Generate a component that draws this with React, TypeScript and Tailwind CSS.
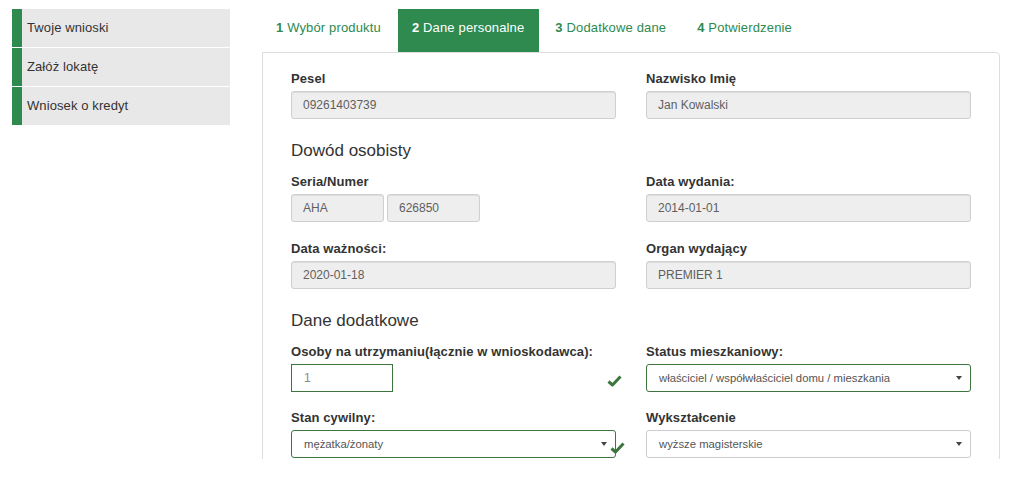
import React from "react";

const sideItems = ["Twoje wnioski", "Załóż lokatę", "Wniosek o kredyt"];

const tabs = [
  { n: "1", label: "Wybór produktu" },
  { n: "2", label: "Dane personalne", active: true },
  { n: "3", label: "Dodatkowe dane" },
  { n: "4", label: "Potwierdzenie" },
];

const Check = () => (
  <svg width="15" height="12" viewBox="0 0 15 12" className="block">
    <path d="M1.5 6.5 L5.5 10 L13.5 1.5" fill="none" stroke="#3c763d" strokeWidth="3" strokeLinejoin="round" />
  </svg>
);

const Caret = () => (
  <svg width="6" height="4" viewBox="0 0 6 4" className="block">
    <path d="M0 0 H6 L3 4 Z" fill="#444" />
  </svg>
);

const Label = ({ children }: { children: React.ReactNode }) => (
  <div className="h-[18px] leading-[18px] mb-[3px] text-[13px] tracking-[0.1px] font-bold text-[#333] whitespace-nowrap">
    {children}
  </div>
);

const ReadOnly = ({ value, className = "" }: { value: string; className?: string }) => (
  <div
    className={`h-[28px] rounded-[3px] border border-[#cfcfcf] bg-[#eeeeee] px-[11px] flex items-center text-[12px] text-[#5f5f5f] shadow-[inset_0_1px_1px_rgba(0,0,0,0.075)] ${className}`}
  >
    {value}
  </div>
);

const Select = ({ value, ok }: { value: string; ok?: boolean }) => (
  <div
    className={`h-[28px] rounded-[3px] border bg-white pl-[12px] pr-[8px] flex items-center justify-between text-[11.3px] text-[#555] ${
      ok ? "border-[#3c763d]" : "border-[#cccccc]"
    }`}
  >
    <span>{value}</span>
    <Caret />
  </div>
);

export default function App() {
  return (
    <div className="w-[1023px] h-[459px] overflow-hidden bg-white font-['Liberation_Sans',Arial,sans-serif]">
      <div className="flex pl-[12px] pt-[9px]">
        {/* sidebar */}
        <div className="w-[218px] flex flex-col gap-[1px]">
          {sideItems.map((s) => (
            <div
              key={s}
              className="h-[38px] bg-[#e8e8e8] border-l-[10px] border-[#2e8a4f] pl-[5px] flex items-center text-[13px] tracking-[0.1px] text-[#333]"
            >
              {s}
            </div>
          ))}
        </div>

        {/* main */}
        <div className="ml-[32px] w-[738px]">
          <div className="flex gap-[2px] h-[43px]">
            {tabs.map((t) => (
              <div
                key={t.n}
                className={`h-[43px] pl-[14px] pr-[15px] pt-[9px] leading-[20px] text-[13px] tracking-[0.15px] whitespace-nowrap ${
                  t.active ? "bg-[#2e8a4f] text-white" : "text-[#2e8a4f]"
                }`}
              >
                <span className="font-bold">{t.n}</span> {t.label}
              </div>
            ))}
          </div>

          <div className="border border-[#dddddd] rounded-tr-[4px] px-[28px] pt-[17px] pb-[40px]">
            {/* row A */}
            <div className="grid grid-cols-2 gap-x-[30px]">
              <div>
                <Label>Pesel</Label>
                <ReadOnly value="09261403739" />
              </div>
              <div>
                <Label>Nazwisko Imię</Label>
                <ReadOnly value="Jan Kowalski" />
              </div>
            </div>

            <div className="mt-[22px] mb-[12px] h-[20px] leading-[20px] text-[17px] text-[#333]">Dowód osobisty</div>

            {/* row B */}
            <div className="grid grid-cols-2 gap-x-[30px]">
              <div>
                <Label>Seria/Numer</Label>
                <div className="flex gap-[3px]">
                  <ReadOnly value="AHA" className="w-[93px]" />
                  <ReadOnly value="626850" className="w-[93px]" />
                </div>
              </div>
              <div>
                <Label>Data wydania:</Label>
                <ReadOnly value="2014-01-01" />
              </div>
            </div>

            {/* row C */}
            <div className="mt-[18px] grid grid-cols-2 gap-x-[30px]">
              <div>
                <Label>Data ważności:</Label>
                <ReadOnly value="2020-01-18" />
              </div>
              <div>
                <Label>Organ wydający</Label>
                <ReadOnly value="PREMIER 1" />
              </div>
            </div>

            <div className="mt-[22px] mb-[12px] h-[20px] leading-[20px] text-[17px] text-[#333]">Dane dodatkowe</div>

            {/* row D */}
            <div className="grid grid-cols-2 gap-x-[30px]">
              <div className="relative">
                <Label>Osoby na utrzymaniu(łącznie w wnioskodawca):</Label>
                <div className="w-[102px] h-[28px] border border-[#3c763d] bg-white px-[12px] flex items-center text-[12px] text-[#888]">
                  1
                </div>
                <div className="absolute right-[-6px] top-[32px]">
                  <Check />
                </div>
              </div>
              <div>
                <Label>Status mieszkaniowy:</Label>
                <Select value="właściciel / współwłaściciel domu / mieszkania" ok />
              </div>
            </div>

            {/* row E */}
            <div className="mt-[17px] grid grid-cols-2 gap-x-[30px]">
              <div className="relative">
                <Label>Stan cywilny:</Label>
                <Select value="mężatka/żonaty" ok />
                <div className="absolute right-[-9px] top-[33px]">
                  <Check />
                </div>
              </div>
              <div>
                <Label>Wykształcenie</Label>
                <Select value="wyższe magisterskie" />
              </div>
            </div>
          </div>
        </div>
      </div>
    </div>
  );
}
